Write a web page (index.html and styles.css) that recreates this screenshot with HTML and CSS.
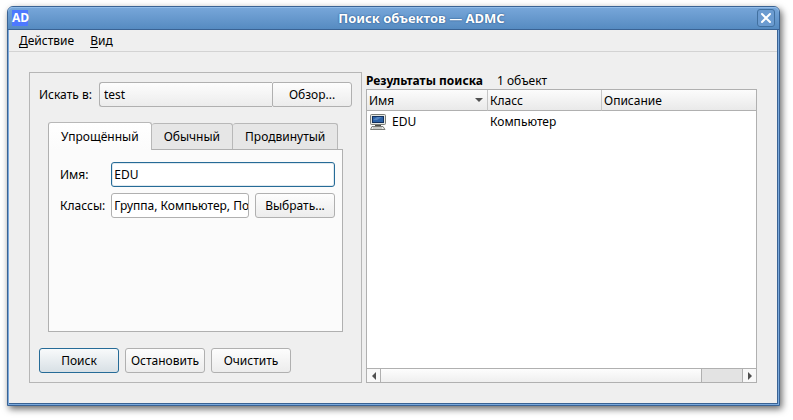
FILE: index.html
```html
<!DOCTYPE html>
<html lang="ru">
<head>
    <meta charset="UTF-8">
    <meta name="viewport" content="width=device-width, initial-scale=1.0">
    <title>Поиск объектов — ADMC</title>
    <link rel="stylesheet" href="styles.css">
</head>
<body>
    <div class="window">
        <header class="titlebar">
            <span class="app-icon">AD</span>
            <h1>Поиск объектов — ADMC</h1>
            <button type="button" class="close" aria-label="Закрыть">
                <svg width="12" height="12" viewBox="0 0 12 12"><path d="M2 2l8 8M10 2l-8 8" stroke="#fff" stroke-width="2" stroke-linecap="round"/></svg>
            </button>
        </header>

        <nav class="menubar">
            <a href="#"><u>Д</u>ействие</a>
            <a href="#"><u>В</u>ид</a>
        </nav>

        <main class="content">
            <form class="search-panel">
                <div class="search-base">
                    <label for="base">Искать в:</label>
                    <select id="base" name="base">
                        <option>test</option>
                    </select>
                    <button type="button" class="btn browse">Обзор...</button>
                </div>

                <div class="tabs">
                    <div class="tab-list" role="tablist">
                        <button type="button" class="tab active" role="tab" aria-selected="true">Упрощённый</button>
                        <button type="button" class="tab" role="tab" aria-selected="false">Обычный</button>
                        <button type="button" class="tab" role="tab" aria-selected="false">Продвинутый</button>
                    </div>
                    <div class="tab-pane" role="tabpanel">
                        <label for="name">Имя:</label>
                        <input type="text" id="name" name="name" class="focused" value="EDU">
                        <label for="classes">Классы:</label>
                        <div class="classes">
                            <input type="text" id="classes" name="classes" value="Группа, Компьютер, Пользователь" readonly>
                            <button type="button" class="btn">Выбрать...</button>
                        </div>
                    </div>
                </div>

                <div class="actions">
                    <button type="button" class="btn default">Поиск</button>
                    <button type="button" class="btn">Остановить</button>
                    <button type="button" class="btn">Очистить</button>
                </div>
            </form>

            <section class="results">
                <div class="results-header">
                    <h2>Результаты поиска</h2>
                    <span>1 объект</span>
                </div>
                <div class="results-view">
                    <table>
                        <colgroup>
                            <col class="col-name">
                            <col class="col-class">
                            <col>
                        </colgroup>
                        <thead>
                            <tr>
                                <th>
                                    <div class="sorted">Имя
                                        <svg width="8" height="4" viewBox="0 0 8 4"><path d="M0 0h8l-4 4z" fill="#505050"/></svg>
                                    </div>
                                </th>
                                <th>Класс</th>
                                <th>Описание</th>
                            </tr>
                        </thead>
                        <tbody>
                            <tr>
                                <td>
                                    <div class="object">
                                        <svg width="16" height="16" viewBox="0 0 16 16">
                                            <rect x="0.5" y="0.5" width="15" height="10" rx="1" fill="#e6e8e2" stroke="#7b7d77"/>
                                            <rect x="2.500" y="2.500" width="11" height="6" fill="#2c62a6" stroke="#12305c"/>
                                            <path d="M3 6l4-3h5l-5 3z" fill="#5585c0"/>
                                            <path d="M5 11h6v1H5z" fill="#4e504b"/>
                                            <path d="M2 12.500h11l2 3H.5z" fill="#eeeeec" stroke="#7b7d77"/>
                                            <path d="M3 14h9" stroke="#a5a7a1"/>
                                        </svg>
                                        EDU
                                    </div>
                                </td>
                                <td>Компьютер</td>
                                <td></td>
                            </tr>
                        </tbody>
                    </table>
                    <div class="scrollbar">
                        <button type="button" aria-label="Влево"><svg width="4" height="8" viewBox="0 0 4 8"><path d="M4 0v8L0 4z" fill="#505050"/></svg></button>
                        <div class="track"><div class="thumb"></div></div>
                        <button type="button" aria-label="Вправо"><svg width="4" height="8" viewBox="0 0 4 8"><path d="M0 0v8l4-4z" fill="#505050"/></svg></button>
                    </div>
                </div>
            </section>
        </main>
    </div>
</body>
</html>
```

FILE: styles.css
```css
* {
    box-sizing: border-box;
}

body {
    margin: 0;
    padding: 6px 13px 14px 7px;
    height: 100vh;
    display: flex;
    background-color: #fff;
    color: #000;
    font-family: "Noto Sans", "Open Sans", sans-serif;
    font-size: 12px;
    line-height: 17px;
}

button, input, select {
    font: inherit;
    color: inherit;
    margin: 0;
}

.window {
    flex: 1;
    display: flex;
    flex-direction: column;
    background-color: #efefef;
    border: 1px solid #3a6394;
    border-radius: 6px 6px 0 0;
    box-shadow: inset 1px 0 #7ba9dc, inset -1px 0 #7ba9dc, inset 0 -1px #7ba9dc, inset -2px 0 #3a6394, inset 0 -2px #3a6394, 2px 3px 7px rgba(0, 0, 0, 0.6);
    padding: 0 2px 2px 1px;
}

.titlebar {
    display: flex;
    align-items: center;
    height: 23px;
    margin: 0 -2px 0 -1px;
    padding: 0 4px;
    background: linear-gradient(#78a7da, #568bc1);
    border-bottom: 1px solid #3a6394;
    border-radius: 5px 5px 0 0;
    box-shadow: inset 0 1px #92bce8;
}

.app-icon {
    width: 16px;
    height: 16px;
    background-color: #4d79ff;
    color: #fff;
    font: bold 12px/16px "Open Sans", sans-serif;
    text-align: center;
}

.titlebar h1 {
    flex: 1;
    margin: 0;
    padding-left: 58px;
    color: #fff;
    font-size: 13px;
    line-height: 18px;
    text-align: center;
    text-shadow: 0 0 2px #2f5c91, 0 0 1px #2f5c91;
}

.close {
    display: flex;
    align-items: center;
    justify-content: center;
    width: 18px;
    height: 18px;
    padding: 0;
    background: #6b9bd0;
    border: 1px solid #41709f;
    border-radius: 3px;
}

.menubar {
    display: flex;
    gap: 16px;
    height: 22px;
    padding: 2px 10px;
    border-bottom: 1px solid #d3d3d3;
}

.menubar a {
    color: inherit;
    text-decoration: none;
}

.menubar u {
    text-underline-offset: 2px;
}

.content {
    flex: 1;
    display: grid;
    grid-template-columns: 333fr 391fr;
    gap: 4px;
    min-height: 0;
    padding: 20px;
}

.search-panel {
    display: flex;
    flex-direction: column;
    min-width: 0;
    padding: 9px;
    border: 1px solid #b6b6b6;
}

.search-base {
    display: flex;
    align-items: center;
    margin-bottom: 15px;
}

.search-base label {
    margin-right: 7px;
}

.search-base select {
    flex: 1;
    min-width: 0;
    height: 25px;
    padding: 0 4px;
    appearance: none;
    background: linear-gradient(#fdfdfd, #ececec);
    border: 1px solid #b0b0b0;
    border-right: 0;
    border-radius: 3px 0 0 3px;
}

.btn {
    width: 80px;
    height: 25px;
    padding: 0;
    background: linear-gradient(#fdfdfd, #ececec);
    border: 1px solid #b0b0b0;
    border-radius: 3px;
}

.btn.browse {
    border-radius: 2px 3px 3px 2px;
}

.btn.default {
    background: linear-gradient(#f8fafb, #d8e0e5);
    border-color: #266b97;
}

.tabs {
    flex: 1;
    display: flex;
    flex-direction: column;
    margin: 0 9px 16px;
}

.tab-list {
    display: flex;
    align-items: flex-end;
}

.tab {
    height: 26px;
    padding: 0 12px;
    background-color: #e6e6e6;
    border: 1px solid #b8b8b8;
    border-left: 0;
    border-bottom: 0;
    border-radius: 3px 3px 0 0;
}

.tab.active {
    height: 28px;
    margin-bottom: -1px;
    background: linear-gradient(#fff, #fbfbfb);
    border-left: 1px solid #b0b0b0;
    z-index: 1;
}

.tab-pane {
    flex: 1;
    display: grid;
    grid-template-columns: auto 1fr;
    align-content: start;
    align-items: center;
    gap: 6px;
    padding: 12px 7px 12px 11px;
    background-color: #fbfbfb;
    border: 1px solid #b0b0b0;
}

.tab-pane input {
    width: 100%;
    min-width: 0;
    height: 25px;
    padding: 0 2px;
    background-color: #fff;
    border: 1px solid #b0b0b0;
    border-radius: 3px;
    outline: none;
}

.tab-pane input.focused {
    border-color: #266b97;
    box-shadow: inset 0 0 0 1px #dfe9ef;
}

.classes {
    display: flex;
    gap: 6px;
}

.classes input {
    padding-right: 0;
}

.classes .btn {
    flex-shrink: 0;
}

.actions {
    display: flex;
    gap: 6px;
}

.results {
    display: flex;
    flex-direction: column;
    min-width: 0;
}

.results-header {
    display: flex;
    gap: 14px;
}

.results-header h2 {
    margin: 0;
    font-size: 12px;
}

.results-view {
    flex: 1;
    display: flex;
    flex-direction: column;
    background-color: #fff;
    border: 1px solid #b0b0b0;
}

table {
    width: 100%;
    table-layout: fixed;
    border-collapse: separate;
    border-spacing: 0;
}

.col-name {
    width: 121px;
}

.col-class {
    width: 114px;
}

th {
    height: 21px;
    padding: 0 2px;
    background: linear-gradient(#fcfcfc, #e9e9e9);
    border-right: 1px solid #c6c6c6;
    border-bottom: 1px solid #b0b0b0;
    font-weight: normal;
    text-align: left;
}

th:last-child {
    border-right: 0;
}

td {
    height: 21px;
    padding: 0 2px;
}

.sorted {
    display: flex;
    align-items: center;
    justify-content: space-between;
    padding-right: 2px;
}

.object {
    display: flex;
    align-items: center;
    gap: 6px;
    padding-left: 1px;
}

.scrollbar {
    display: flex;
    height: 14px;
    margin-top: auto;
    border-top: 1px solid #b0b0b0;
}

.scrollbar button {
    display: flex;
    align-items: center;
    justify-content: center;
    width: 13px;
    padding: 0;
    background: #f8f8f8;
    border: 0;
}

.track {
    flex: 1;
    background-color: #e3e3e3;
    border: solid #b0b0b0;
    border-width: 0 1px;
}

.thumb {
    width: 89%;
    height: 100%;
    background: linear-gradient(#fdfdfd, #efefef);
    border-right: 1px solid #b0b0b0;
}
```
